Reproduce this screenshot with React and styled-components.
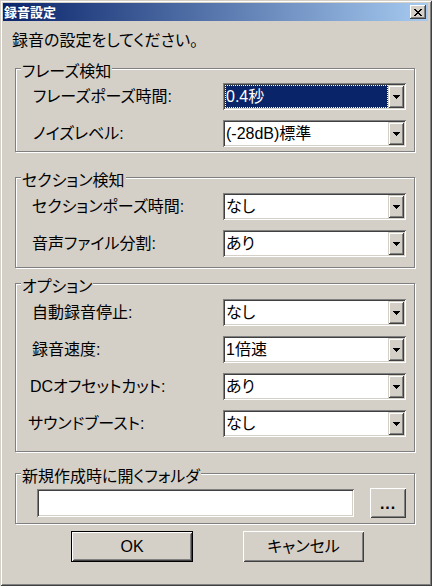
import React from 'react';
import styled, { createGlobalStyle } from 'styled-components';

const FACE = '#d4d0c8';
const FONT = `"Liberation Sans", "Noto Sans CJK JP", sans-serif`;

const GlobalStyle = createGlobalStyle`
  html, body { margin: 0; padding: 0; background: ${FACE}; }
  body { font-family: ${FONT}; }
  * { box-sizing: border-box; }
`;

const Window = styled.div`
  width: 432px;
  height: 586px;
  padding: 3px 4px 3px 3px;
  background: ${FACE};
  box-shadow: inset 1px 1px 0 ${FACE}, inset -1px -1px 0 #404040,
    inset 2px 2px 0 #ffffff, inset -2px -2px 0 #808080;
  display: flex;
  flex-direction: column;
  font-family: ${FONT};
  font-size: 16px;
  font-feature-settings: "palt";
  color: #000;
`;

const TitleBar = styled.div`
  height: 18px;
  flex: none;
  display: flex;
  align-items: center;
  justify-content: space-between;
  padding: 0 2px 0 1px;
  background: linear-gradient(to right, #0a246a, #a6caf0);
  color: #fff;
  font-family: "Noto Sans CJK JP", sans-serif;
  font-feature-settings: normal;
  font-weight: bold;
  font-size: 13px;
  line-height: 18px;
`;

const CloseButton = styled.div`
  width: 16px;
  height: 14px;
  background: ${FACE};
  display: flex;
  align-items: center;
  justify-content: center;
  box-shadow: inset -1px -1px 0 #404040, inset 1px 1px 0 #ffffff,
    inset -2px -2px 0 #808080, inset 2px 2px 0 ${FACE};
  padding: 0 1px 0 0;
`;

const Instruction = styled.div`
  margin: 11px 0 0 9px;
  line-height: 18px;
`;

const Group = styled.div`
  position: relative;
  width: 400px;
  margin: ${(p) => p.$mt}px 0 0 12px;
  border: 1px solid #808080;
  box-shadow: inset 1px 1px 0 #ffffff, 1px 1px 0 #ffffff;
  padding: ${(p) => p.$pt}px 8px ${(p) => p.$pb}px 0;
`;

const Legend = styled.span`
  position: absolute;
  top: -6px;
  left: 5px;
  padding: 0 1px;
  background: ${FACE};
  line-height: 18px;
`;

const Rows = styled.div`
  display: grid;
  grid-template-columns: 1fr 183px;
  grid-auto-rows: 27px;
  row-gap: 10px;
  align-items: center;
`;

const Label = styled.div`
  padding-left: ${(p) => p.$indent}px;
  line-height: 18px;
  white-space: nowrap;
`;

const Combo = styled.div`
  height: 27px;
  display: flex;
  padding: 2px;
  background: #ffffff;
  box-shadow: inset 1px 1px 0 #808080, inset -1px -1px 0 #ffffff,
    inset 2px 2px 0 #404040, inset -2px -2px 0 ${FACE};
`;

const ComboValue = styled.div`
  flex: 1;
  display: flex;
  align-items: center;
  padding-left: 1px;
  line-height: 18px;
  white-space: nowrap;
  background: ${(p) => (p.$selected ? '#0a246a' : 'transparent')};
  color: ${(p) => (p.$selected ? '#ffffff' : '#000000')};
  outline: ${(p) => (p.$selected ? '1px dotted #ffffff' : 'none')};
  outline-offset: -1px;
`;

const DropButton = styled.div`
  width: 16px;
  flex: none;
  background: ${FACE};
  display: flex;
  align-items: center;
  justify-content: center;
  box-shadow: inset 1px 1px 0 ${FACE}, inset -1px -1px 0 #404040,
    inset 2px 2px 0 #ffffff, inset -2px -2px 0 #808080;
  padding: 1px 0 0 0;
`;

const FolderRow = styled.div`
  display: flex;
  align-items: center;
  gap: 16px;
  padding-left: 21px;
  height: 30px;
`;

const TextField = styled.div`
  width: 318px;
  height: 28px;
  background: #ffffff;
  box-shadow: inset 1px 1px 0 #808080, inset -1px -1px 0 #ffffff,
    inset 2px 2px 0 #404040, inset -2px -2px 0 ${FACE};
`;

const PushButton = styled.div`
  width: ${(p) => p.$w}px;
  height: ${(p) => p.$h}px;
  background: ${FACE};
  display: flex;
  align-items: center;
  justify-content: center;
  line-height: 18px;
  box-shadow: ${(p) =>
    p.$default
      ? `inset 1px 1px 0 #000, inset -1px -1px 0 #000, inset 2px 2px 0 #fff, inset -2px -2px 0 #404040, inset 3px 3px 0 ${FACE}, inset -3px -3px 0 #808080`
      : `inset 1px 1px 0 #fff, inset -1px -1px 0 #404040, inset 2px 2px 0 ${FACE}, inset -2px -2px 0 #808080`};
`;

const Dots = styled.span`
  font-weight: bold;
  letter-spacing: 1px;
  margin-top: 2px;
`;

const ButtonRow = styled.div`
  display: flex;
  gap: 50px;
  margin: 7px 0 0 68px;
`;

const Arrow = () => (
  <svg width="7" height="4" viewBox="0 0 7 4" shapeRendering="crispEdges">
    <path d="M0 0h7v1H0zM1 1h5v1H1zM2 2h3v1H2zM3 3h1v1H3z" fill="#000" />
  </svg>
);

const CloseGlyph = () => (
  <svg width="8" height="7" viewBox="0 0 8 7" shapeRendering="crispEdges">
    <path
      d="M0 0h2v1H0zM6 0h2v1H6zM1 1h2v1H1zM5 1h2v1H5zM2 2h4v1H2zM3 3h2v1H3zM2 4h4v1H2zM1 5h2v1H1zM5 5h2v1H5zM0 6h2v1H0zM6 6h2v1H6z"
      fill="#000"
    />
  </svg>
);

const ComboBox = ({ value, selected }) => (
  <Combo>
    <ComboValue $selected={selected}>{value}</ComboValue>
    <DropButton>
      <Arrow />
    </DropButton>
  </Combo>
);

const groups = [
  {
    title: 'フレーズ検知',
    mt: 18,
    pt: 14,
    pb: 4,
    rows: [
      { label: 'フレーズポーズ時間:', value: '0.4秒', selected: true, indent: 17 },
      { label: 'ノイズレベル:', value: '(-28dB)標準', indent: 17 },
    ],
  },
  {
    title: 'セクション検知',
    mt: 25,
    pt: 15,
    pb: 10,
    rows: [
      { label: 'セクションポーズ時間:', value: 'なし', indent: 16 },
      { label: '音声ファイル分割:', value: 'あり', indent: 16 },
    ],
  },
  {
    title: 'オプション',
    mt: 15,
    pt: 15,
    pb: 14,
    rows: [
      { label: '自動録音停止:', value: 'なし', indent: 16 },
      { label: '録音速度:', value: '1倍速', indent: 16 },
      { label: 'DCオフセットカット:', value: 'あり', indent: 14 },
      { label: 'サウンドブースト:', value: 'なし', indent: 12 },
    ],
  },
];

export default function App() {
  return (
    <>
      <GlobalStyle />
      <Window>
        <TitleBar>
          <span>録音設定</span>
          <CloseButton>
            <CloseGlyph />
          </CloseButton>
        </TitleBar>
        <Instruction>録音の設定をしてください。</Instruction>
        {groups.map((g) => (
          <Group key={g.title} $mt={g.mt} $pt={g.pt} $pb={g.pb}>
            <Legend>{g.title}</Legend>
            <Rows>
              {g.rows.map((r) => (
                <React.Fragment key={r.label}>
                  <Label $indent={r.indent}>{r.label}</Label>
                  <ComboBox value={r.value} selected={r.selected} />
                </React.Fragment>
              ))}
            </Rows>
          </Group>
        ))}
        <Group $mt={21} $pt={14} $pb={5}>
          <Legend>新規作成時に開くフォルダ</Legend>
          <FolderRow>
            <TextField />
            <PushButton $w={36} $h={30}>
              <Dots>...</Dots>
            </PushButton>
          </FolderRow>
        </Group>
        <ButtonRow>
          <PushButton $w={122} $h={31} $default>OK</PushButton>
          <PushButton $w={121} $h={31}>キャンセル</PushButton>
        </ButtonRow>
      </Window>
    </>
  );
}
